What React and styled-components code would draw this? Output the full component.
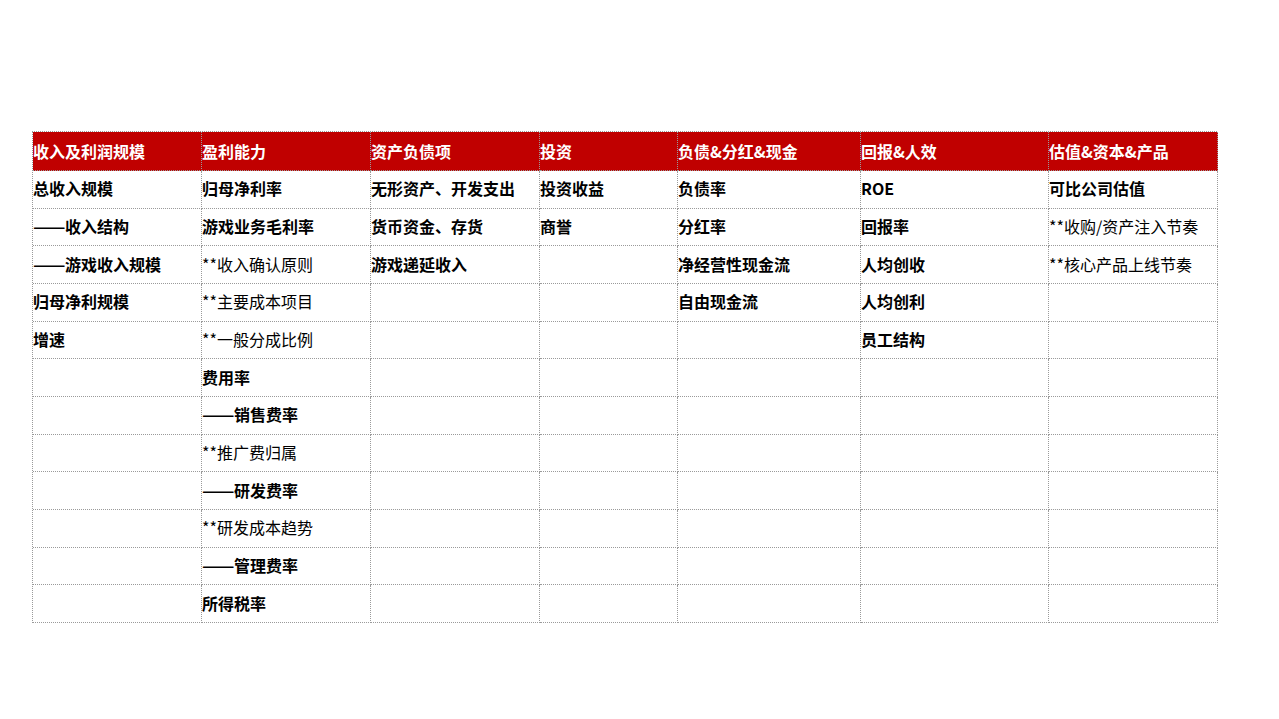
import React from "react";
import styled, { createGlobalStyle } from "styled-components";

const Global = createGlobalStyle`
  html, body { margin: 0; padding: 0; background: #fff; }
  body { font-family: "Noto Sans CJK SC", "Noto Sans", sans-serif; }
`;

const Page = styled.div`
  width: 1279px;
  height: 719px;
  padding: 131px 0 0 32px;
  box-sizing: border-box;
`;

const Grid = styled.div`
  display: grid;
  grid-template-columns: 169px 169px 169px 138px 183px 188px 169px;
  grid-template-rows: 39px repeat(12, 37.67px);
  width: 1185px;
  border-left: 1px dotted #9a9a9a;
  border-top: 1px dotted #9a9a9a;
  box-sizing: border-box;
`;

const Cell = styled.div`
  display: flex;
  align-items: center;
  padding: 0 0 2px 0;
  border-right: 1px dotted #9a9a9a;
  border-bottom: 1px dotted #9a9a9a;
  font-size: 16px;
  line-height: 1;
  white-space: nowrap;
  overflow: hidden;
  color: #000;
  font-weight: ${(p) => (p.$bold ? 700 : 400)};
`;

const HeadCell = styled(Cell)`
  background: #c00000;
  color: #fff;
  font-weight: 700;
  padding: 0;
`;

const DashBox = styled.span`
  display: inline-block;
  width: 32px;
  white-space: nowrap;
`;

const DashText = styled.span`
  display: inline-block;
  transform: scaleX(1.19);
  transform-origin: left center;
`;

const headers = [
  "收入及利润规模",
  "盈利能力",
  "资产负债项",
  "投资",
  "负债&分红&现金",
  "回报&人效",
  "估值&资本&产品",
];

// each column: list of [text, bold]
const cols = [
  [["总收入规模", 1], ["——收入结构", 1], ["——游戏收入规模", 1], ["归母净利规模", 1], ["增速", 1]],
  [
    ["归母净利率", 1],
    ["游戏业务毛利率", 1],
    ["**收入确认原则", 0],
    ["**主要成本项目", 0],
    ["**一般分成比例", 0],
    ["费用率", 1],
    ["——销售费率", 1],
    ["**推广费归属", 0],
    ["——研发费率", 1],
    ["**研发成本趋势", 0],
    ["——管理费率", 1],
    ["所得税率", 1],
  ],
  [["无形资产、开发支出", 1], ["货币资金、存货", 1], ["游戏递延收入", 1]],
  [["投资收益", 1], ["商誉", 1]],
  [["负债率", 1], ["分红率", 1], ["净经营性现金流", 1], ["自由现金流", 1]],
  [["ROE", 1], ["回报率", 1], ["人均创收", 1], ["人均创利", 1], ["员工结构", 1]],
  [["可比公司估值", 1], ["**收购/资产注入节奏", 0], ["**核心产品上线节奏", 0]],
];

function renderText(t) {
  if (t.startsWith("——")) {
    return (
      <>
        <DashBox>
          <DashText>——</DashText>
        </DashBox>
        {t.slice(2)}
      </>
    );
  }
  return t;
}

export default function App() {
  const rows = [];
  for (let r = 0; r < 12; r++) {
    for (let c = 0; c < 7; c++) {
      const item = cols[c][r];
      rows.push(
        <Cell key={`${r}-${c}`} $bold={item ? item[1] === 1 : false}>
          {item ? renderText(item[0]) : ""}
        </Cell>
      );
    }
  }
  return (
    <Page>
      <Global />
      <Grid>
        {headers.map((h) => (
          <HeadCell key={h}>{h}</HeadCell>
        ))}
        {rows}
      </Grid>
    </Page>
  );
}
